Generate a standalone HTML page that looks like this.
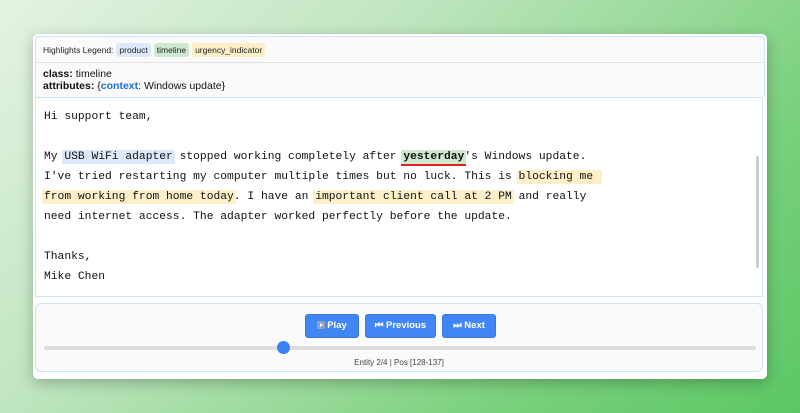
<!DOCTYPE html>
<html><head><style>
body{margin:0;width:800px;height:413px;overflow:hidden;background:linear-gradient(135deg,#e4f3e2 0%,#bfe5bf 35%,#79d07c 75%,#5cc764 100%);font-family:"Liberation Sans",sans-serif;position:relative}
.card{position:absolute;left:33px;top:34px;width:734px;height:345px;background:#fff;border-radius:5px;box-shadow:0 4px 14px rgba(0,0,0,.25)}
.top{position:absolute;left:2px;top:2px;width:728px;height:60px;background:#fafafa;border:1px solid #cfe3f7;border-bottom:none;border-radius:4px 4px 0 0}
.leg{position:absolute;left:7px;top:6px;font-size:8.5px;color:#222}
.tag{display:inline-block;padding:2px 3px;border-radius:3px;margin-left:3px}
.sep{position:absolute;left:0;right:0;top:25px;border-top:1px solid #e2e2e2}
.cls{position:absolute;left:7px;top:31px;font-size:10.5px;line-height:12px;color:#111}
.txt{position:absolute;left:2px;top:63px;width:728px;height:200px;border:1px solid #cfe3f7;box-sizing:border-box;overflow:hidden}
.txt pre{margin:0;padding:9px 0 0 8px;font-family:"Liberation Mono",monospace;font-size:11.3px;line-height:20px;color:#111}
.p{background:#dce9fb;padding:1px 2px;margin:0 -2px}
.t{background:#cfe8d0;font-weight:bold;padding:1px 2px;margin:0 -2px;border-bottom:2px solid #e02020}
.u{background:#fdf0c8;padding:1px 2px;margin:0 -2px}
.sb{position:absolute;right:3px;top:58px;width:3px;height:112px;background:#ccc;border-radius:2px}
.ctl{position:absolute;left:2px;top:269px;width:728px;height:69px;background:#fafafa;border:1px solid #cfe3f7;border-radius:6px;box-sizing:border-box}
.btn{position:absolute;top:10px;height:24px;background:#4285f4;color:#fff;font-size:9.5px;font-weight:bold;border-radius:3px;border:1px solid #3a78e0;box-sizing:border-box;text-align:center;line-height:22px}
.ic{display:inline-block;width:8px;height:8px;background:#8aa4c8;border-radius:1px;vertical-align:-1px;margin-right:2px;position:relative}
.ic:after{content:"";position:absolute;left:3px;top:2px;border-left:3px solid #fff;border-top:2px solid transparent;border-bottom:2px solid transparent}
.track{position:absolute;left:8px;top:42px;width:712px;height:4px;background:#ddd;border-radius:2px}
.thumb{position:absolute;left:241px;top:37px;width:13px;height:13px;border-radius:50%;background:#3b82f6}
.st{position:absolute;left:0;right:0;top:54px;text-align:center;font-size:8px;color:#444}
</style></head><body>
<div class="card">
<div class="top">
<div class="leg">Highlights Legend:<span class="tag" style="background:#dce9fb">product</span><span class="tag" style="background:#cfe8d0">timeline</span><span class="tag" style="background:#fdf0c8">urgency_indicator</span></div>
<div class="sep"></div>
<div class="cls"><b>class:</b> timeline<br><b>attributes:</b> {<b style="color:#1a6fd6">context</b>: Windows update}</div>
</div>
<div class="txt"><pre>Hi support team,

My <span class="p">USB WiFi adapter</span> stopped working completely after <span class="t">yesterday</span>'s Windows update.
I've tried restarting my computer multiple times but no luck. This is <span class="u">blocking me </span>
<span class="u">from working from home today</span>. I have an <span class="u">important client call at 2 PM</span> and really
need internet access. The adapter worked perfectly before the update.

Thanks,
Mike Chen</pre><div class="sb"></div></div>
<div class="ctl">
<div class="btn" style="left:269px;width:54px"><span class="ic"></span>Play</div>
<div class="btn" style="left:329px;width:71px">⏮ Previous</div>
<div class="btn" style="left:406px;width:54px">⏭ Next</div>
<div class="track"></div><div class="thumb"></div>
<div class="st">Entity 2/4 | Pos [128-137]</div>
</div>
</div>
</body></html>
